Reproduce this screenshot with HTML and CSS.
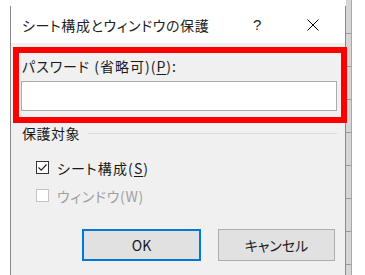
FILE: index.html
```html
<!DOCTYPE html>
<html lang="ja">
<head>
<meta charset="utf-8">
<link rel="stylesheet" href="styles.css">
</head>
<body>
<div class="screen">
  <div class="gutter"></div>
  <div class="dialog">
    <div class="titlebar">
      <span class="title">シート構成とウィンドウの保護</span>
      <span class="help">?</span>
      <span class="close">
        <svg width="12" height="12" viewBox="0 0 12 12"><path d="M0.5 0.5 L11.5 11.5 M11.5 0.5 L0.5 11.5" stroke="#000" stroke-width="1" fill="none"/></svg>
      </span>
    </div>
    <div class="body">
      <div class="label">パスワード (省略可)(<u>P</u>):</div>
      <div class="input"></div>
      <div class="group">
        <span class="group-title">保護対象</span>
        <span class="group-line"></span>
      </div>
      <div class="check">
        <span class="box">
          <svg width="11" height="11" viewBox="0 0 11 11"><path d="M1.5 5.5 L4.2 8.2 L9.5 2.5" stroke="#222" stroke-width="1.2" fill="none"/></svg>
        </span>
        <span class="check-text">シート構成(<u>S</u>)</span>
      </div>
      <div class="check disabled">
        <span class="box"></span>
        <span class="check-text">ウィンドウ(W)</span>
      </div>
      <div class="buttons">
        <span class="btn default">OK</span>
        <span class="btn">キャンセル</span>
      </div>
    </div>
  </div>
  <div class="strip"></div>
</div>
<div class="highlight"></div>
</body>
</html>
```
FILE: styles.css
```css
html, body {
  margin: 0;
  padding: 0;
  background: #ffffff;
}
body {
  width: 365px;
  height: 275px;
  overflow: hidden;
  position: relative;
  font-family: "Noto Sans CJK JP", "Noto Sans", sans-serif;
  font-size: 14px;
  font-feature-settings: "palt" 1;
  color: #1a1a1a;
}
.screen {
  display: flex;
  height: 275px;
}
.gutter {
  width: 10px;
  flex: none;
}
.dialog {
  width: 334px;
  flex: none;
  margin-top: 6px;
  border-left: 1px solid #8a8a8a;
  border-right: 1px solid #8a8a8a;
  display: flex;
  flex-direction: column;
  background: #f0f0f0;
}
.titlebar {
  height: 37px;
  background: #ffffff;
  display: flex;
  align-items: center;
  padding-left: 11px;
  flex: none;
}
.title {
  font-size: 14px;
  color: #222;
  width: 231px;
  white-space: nowrap;
  letter-spacing: 0.6px;
}
.help {
  font-family: "Liberation Sans", sans-serif;
  font-size: 15px;
  color: #222;
  width: 54px;
}
.close {
  display: flex;
  align-items: center;
}
.body {
  flex: 1;
  padding: 14px 8px 0 10px;
  display: flex;
  flex-direction: column;
}
.label {
  height: 19px;
  line-height: 19px;
  margin-left: 1px;
  white-space: nowrap;
  letter-spacing: 1px;
}
.label u, .check-text u {
  text-underline-offset: 2px;
}
.input {
  margin-top: 5px;
  height: 28px;
  background: #ffffff;
  border: 1px solid #adadad;
}
.group {
  margin-top: 13px;
  display: flex;
  align-items: center;
  height: 19px;
  margin-left: 1px;
}
.group-title {
  line-height: 19px;
  white-space: nowrap;
  letter-spacing: 0.5px;
}
.group-line {
  flex: 1;
  height: 1px;
  background: #dcdcdc;
  margin-left: 8px;
}
.check {
  display: flex;
  align-items: center;
  margin-left: 15px;
  margin-top: 15px;
  height: 19px;
}
.check + .check {
  margin-top: 9px;
}
.box {
  width: 13px;
  height: 13px;
  box-sizing: border-box;
  border: 1px solid #333;
  background: #fff;
  display: flex;
  align-items: center;
  justify-content: center;
}
.check-text {
  margin-left: 8px;
  white-space: nowrap;
  letter-spacing: 1.1px;
}
.disabled .check-text {
  letter-spacing: 0.7px;
}
.disabled .box {
  border-color: #c4c4c4;
}
.disabled .check-text {
  color: #a0a0a0;
}
.buttons {
  margin-top: 24px;
  display: flex;
  justify-content: flex-end;
  gap: 17px;
  padding-right: 2px;
}
.btn {
  width: 117px;
  height: 32px;
  box-sizing: border-box;
  border: 1px solid #adadad;
  background: #e1e1e1;
  display: flex;
  align-items: center;
  justify-content: center;
  font-size: 14px;
  color: #1a1a1a;
}
.btn.default {
  width: 119px;
  border: 2px solid #0078d7;
}
.strip {
  width: 5px;
  flex: none;
  border-right: 1px solid #a8a8a8;
  background-color: #d6d6d6;
  background-image: repeating-linear-gradient(to bottom, transparent 0px, transparent 32px, #9a9a9a 32px, #9a9a9a 33px);
  background-position: 0 1px;
}
.highlight {
  position: absolute;
  left: 13px;
  top: 47px;
  width: 334px;
  height: 76px;
  box-sizing: border-box;
  border: 6px solid #ff0000;
}
```
